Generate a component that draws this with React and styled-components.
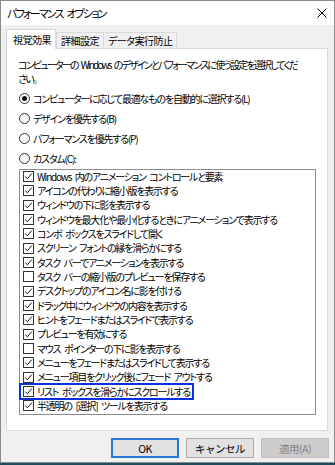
import React from "react";
import styled, { createGlobalStyle } from "styled-components";

const GlobalStyle = createGlobalStyle`
  html, body {
    margin: 0;
    padding: 0;
  }
  body {
    width: 335px;
    height: 465px;
    overflow: hidden;
    background: #1f4d5e;
    font-family: "Noto Sans CJK JP", "Noto Sans", sans-serif;
    font-size: 10px;
    font-feature-settings: "palt";
    letter-spacing: -1.2px;
    word-spacing: 2.5px;
    color: #000;
  }
`;

const options = [
  { label: "Windows 内のアニメーション コントロールと要素", on: true },
  { label: "アイコンの代わりに縮小版を表示する", on: true },
  { label: "ウィンドウの下に影を表示する", on: true },
  { label: "ウィンドウを最大化や最小化するときにアニメーションで表示する", on: true },
  { label: "コンボ ボックスをスライドして開く", on: true },
  { label: "スクリーン フォントの縁を滑らかにする", on: true },
  { label: "タスク バーでアニメーションを表示する", on: true },
  { label: "タスク バーの縮小版のプレビューを保存する", on: false },
  { label: "デスクトップのアイコン名に影を付ける", on: true },
  { label: "ドラッグ中にウィンドウの内容を表示する", on: true },
  { label: "ヒントをフェードまたはスライドで表示する", on: true },
  { label: "プレビューを有効にする", on: true },
  { label: "マウス ポインターの下に影を表示する", on: false },
  { label: "メニューをフェードまたはスライドして表示する", on: true },
  { label: "メニュー項目をクリック後にフェード アウトする", on: true },
  { label: "リスト ボックスを滑らかにスクロールする", on: true, focus: true },
  { label: "半透明の [選択] ツールを表示する", on: true },
];

const modes = [
  { label: "コンピューターに応じて最適なものを自動的に選択する(L)", on: true },
  { label: "デザインを優先する(B)" },
  { label: "パフォーマンスを優先する(P)" },
  { label: "カスタム(C):" },
];

const App = () => {
  return (
    <>
      <GlobalStyle />
      <Window>
        <TitleBar>
          <Title>パフォーマンス オプション</Title>
          <CloseIcon width="10" height="10" viewBox="0 0 10 10">
            <path d="M0.5 0.5 L9.5 9.5 M9.5 0.5 L0.5 9.5" stroke="#000" strokeWidth="1" fill="none" />
          </CloseIcon>
        </TitleBar>
        <Body>
          <Tabs>
            <Tab active>視覚効果</Tab>
            <Tab>詳細設定</Tab>
            <Tab>データ実行防止</Tab>
          </Tabs>
          <Panel>
            <Intro>
              <div>コンピューターの Windows のデザインとパフォーマンスに使う設定を選択してくだ</div>
              <div>さい。</div>
            </Intro>
            <Radios>
              {modes.map((m) => (
                <RadioRow key={m.label}>
                  <Radio on={m.on} />
                  <span>{m.label}</span>
                </RadioRow>
              ))}
            </Radios>
            <ListBox>
              {options.map((o) => (
                <CheckRow key={o.label} focus={o.focus}>
                  <CheckBox>
                    {o.on && (
                      <svg width="9" height="9" viewBox="0 0 9 9">
                        <polyline points="1.2,4.6 3.4,6.8 7.8,1.6" stroke="#111" strokeWidth="1" fill="none" />
                      </svg>
                    )}
                  </CheckBox>
                  <span>{o.label}</span>
                </CheckRow>
              ))}
            </ListBox>
          </Panel>
          <Buttons>
            <Button primary>OK</Button>
            <Button>キャンセル</Button>
            <Button disabled>適用(A)</Button>
          </Buttons>
        </Body>
      </Window>
    </>
  );
};

export default App;

const Window = styled.div`
  width: 335px;
  height: 463px;
  box-sizing: border-box;
  border: 1px solid #8a8a8a;
  background: #f0f0f0;
  display: flex;
  flex-direction: column;
`;

const TitleBar = styled.div`
  height: 24px;
  flex: none;
  background: #ffffff;
  display: flex;
  align-items: center;
  justify-content: space-between;
  padding: 0 7px 0 6px;
`;

const Title = styled.div`
  font-size: 11px;
  letter-spacing: -1.8px;
  word-spacing: 3px;
`;

const CloseIcon = styled.svg`
  display: block;
`;

const Body = styled.div`
  flex: 1;
  padding: 4px 5px 0 5px;
  display: flex;
  flex-direction: column;
`;

const Tabs = styled.div`
  display: flex;
  align-items: flex-end;
  height: 20px;
  margin-bottom: -1px;
  position: relative;
  z-index: 1;
`;

const Tab = styled.div`
  box-sizing: border-box;
  border: 1px solid #d9d9d9;
  border-bottom: none;
  display: flex;
  align-items: center;
  white-space: nowrap;
  height: ${({ active }) => (active ? "20px" : "16px")};
  margin-bottom: ${({ active }) => (active ? "0" : "1px")};
  padding: ${({ active }) => (active ? "0 4px 0 6px" : "0 4px")};
  font-size: 10px;
  letter-spacing: -0.5px;
  background: ${({ active }) => (active ? "#ffffff" : "#f0f0f0")};
  margin-left: ${({ active }) => (active ? "0" : "-1px")};
  &:nth-child(2) {
    margin-left: 0;
  }
`;

const Panel = styled.div`
  height: 383px;
  margin-right: 1px;
  box-sizing: border-box;
  background: #ffffff;
  border: 1px solid #d9d9d9;
  padding: 8.5px 11px 0 11px;
`;

const Intro = styled.div`
  line-height: 14.5px;
  white-space: nowrap;
  letter-spacing: -1.8px;
`;

const Radios = styled.div`
  margin-top: 2px;
  display: flex;
  flex-direction: column;
`;

const RadioRow = styled.div`
  height: 20px;
  display: flex;
  align-items: center;
  gap: 3px;
  padding-left: 1px;
  line-height: 14px;
`;

const Radio = styled.span`
  width: 11px;
  height: 11px;
  box-sizing: border-box;
  border: 1px solid #333333;
  border-radius: 50%;
  background: #ffffff;
  display: flex;
  align-items: center;
  justify-content: center;
  &::after {
    content: "";
    display: ${({ on }) => (on ? "block" : "none")};
    width: 5px;
    height: 5px;
    border-radius: 50%;
    background: #111111;
  }
`;

const ListBox = styled.div`
  height: 246px;
  box-sizing: border-box;
  margin: 0 0 0 1px;
  border: 1px solid #8c8c8c;
  background: #ffffff;
  display: flex;
  flex-direction: column;
`;

const CheckRow = styled.div`
  height: 14.33px;
  line-height: 14px;
  width: fit-content;
  display: flex;
  align-items: center;
  gap: 3px;
  padding: 0 3px 0 3px;
  white-space: nowrap;
  outline: ${({ focus }) => (focus ? "2px solid #0a2fdc" : "none")};
  outline-offset: -1px;
`;

const CheckBox = styled.span`
  width: 11px;
  height: 11px;
  flex: none;
  box-sizing: border-box;
  border: 1px solid #333333;
  background: #ffffff;
  display: flex;
  align-items: center;
  justify-content: center;
`;

const Buttons = styled.div`
  display: flex;
  justify-content: flex-end;
  gap: 7px;
  margin-top: 7px;
`;

const Button = styled.button`
  width: 68px;
  height: 20px;
  box-sizing: border-box;
  font-family: inherit;
  font-size: 10.5px;
  letter-spacing: -0.5px;
  padding: 0;
  background: ${({ disabled }) => (disabled ? "#cccccc" : "#e1e1e1")};
  color: ${({ disabled }) => (disabled ? "#838383" : "#000000")};
  border: ${({ primary, disabled }) =>
    primary ? "2px solid #2a78d6" : disabled ? "1px solid #bfbfbf" : "1px solid #adadad"};
`;
